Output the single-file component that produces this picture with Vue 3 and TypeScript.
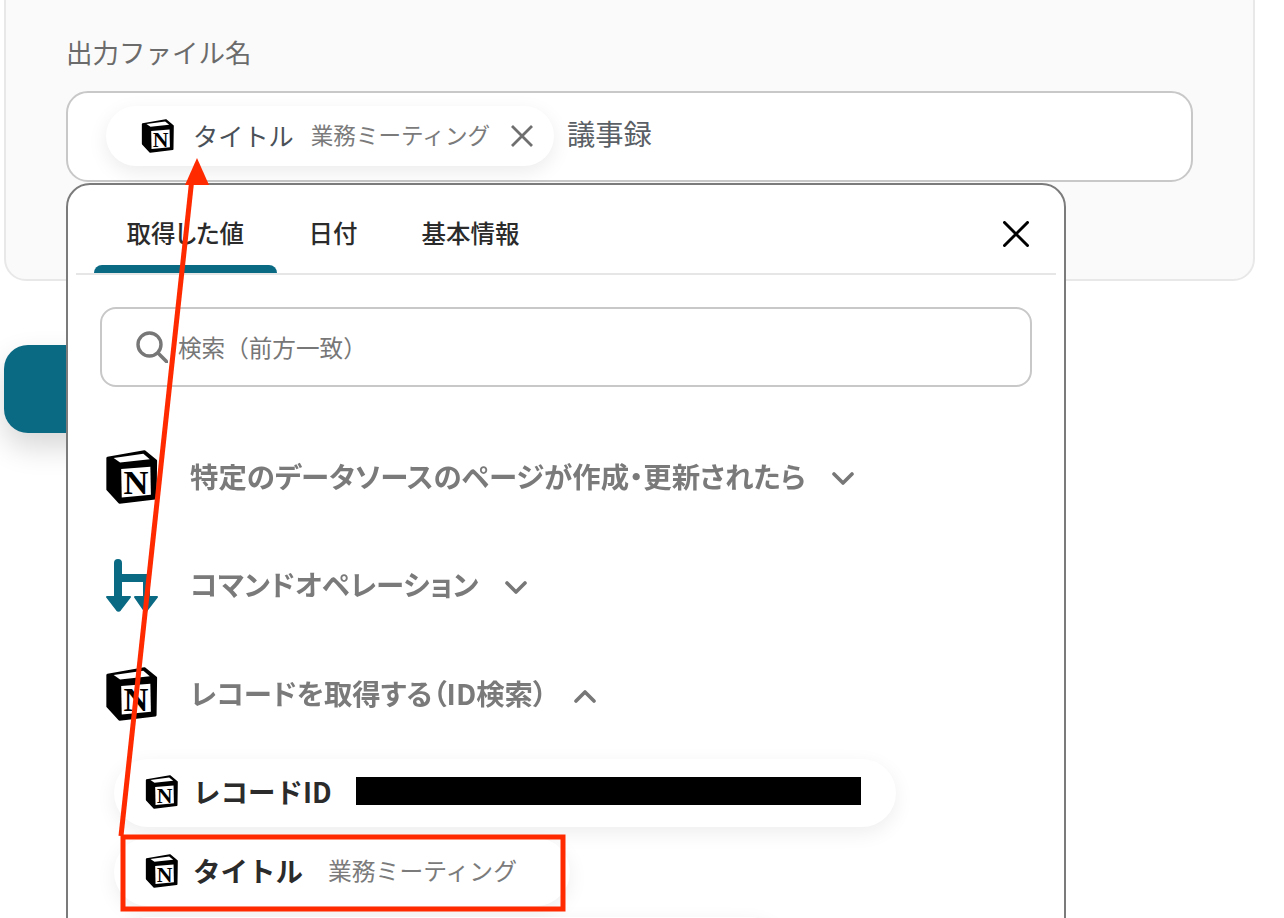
<script setup lang="ts">
import { h } from 'vue'
interface Section { title: string; icon: 'notion' | 'yoom'; open: boolean }
const tabs: string[] = ['取得した値', '日付', '基本情報']
const sections: Section[] = [
  { title: '特定のデータソースのページが作成・更新されたら', icon: 'notion', open: false },
  { title: 'コマンドオペレーション', icon: 'yoom', open: false },
  { title: 'レコードを取得する（ID検索）', icon: 'notion', open: true },
]
const NotionIcon = () =>
  h('svg', { viewBox: '0 0 100 100' }, [
    h('path', { d: 'M5 15 L73 3 L94 20 L93 89 L27 97 L5 73 Z', fill: '#000', stroke: '#000', 'stroke-width': 5, 'stroke-linejoin': 'round' }),
    h('path', { d: 'M16 15 L71 7 L83 17 L28 23 Z', fill: '#fff' }),
    h('path', { d: 'M30 35 L84 31 L85 83 L31 88 Z', fill: '#fff' }),
    h('text', { x: 57.5, y: 81, 'text-anchor': 'middle', 'font-family': "'Liberation Serif', serif", 'font-weight': 700, 'font-size': 64, fill: '#000' }, 'N'),
  ])
</script>

<template>
  <div class="page">
    <section class="panel">
      <div class="label">出力ファイル名</div>
      <div class="field">
        <div class="chip">
          <NotionIcon class="chip-icon" />
          <span class="chip-name">タイトル</span>
          <span class="chip-value">業務ミーティング</span>
          <svg class="chip-x" viewBox="0 0 24 24"><path d="M2 2 L22 22 M22 2 L2 22" stroke="#6f6f6f" stroke-width="2.8" /></svg>
        </div>
        <span class="field-text">議事録</span>
      </div>
    </section>

    <div class="primary"></div>

    <div class="popup">
      <div class="tabs">
        <div v-for="(t, i) in tabs" :key="t" class="tab" :class="{ active: i === 0 }">{{ t }}</div>
        <svg class="close" viewBox="0 0 26 26"><path d="M1.5 1.5 L24.5 24.5 M24.5 1.5 L1.5 24.5" stroke="#000" stroke-width="3" stroke-linecap="round" /></svg>
      </div>
      <div class="search">
        <svg class="search-icon" viewBox="0 0 32 32"><circle cx="13.5" cy="13.5" r="11.5" fill="none" stroke="#777" stroke-width="3.4" /><path d="M22 22 L31 31" stroke="#777" stroke-width="3.6" stroke-linecap="round" /></svg>
        <span>検索（前方一致）</span>
      </div>
      <div class="sections">
        <div v-for="s in sections" :key="s.title" class="section">
          <NotionIcon v-if="s.icon === 'notion'" class="section-icon" />
          <svg v-else class="section-icon" viewBox="0 0 54 54">
            <path d="M9 4 a4 4 0 0 1 8 0 V15 H45 V38 H38 V23 H17 V38 H9 Z" fill="#0a6a84" />
            <path d="M2 38 H25 L15 51 a2 2 0 0 1 -3 0 Z M30 38 H52 L42 51 a2 2 0 0 1 -3 0 Z" fill="#0a6a84" stroke="#0a6a84" stroke-width="2" stroke-linejoin="round" />
          </svg>
          <span class="section-title">{{ s.title }}</span>
          <svg class="chevron" viewBox="0 0 22 14"><path :d="s.open ? 'M2 12 L11 3 L20 12' : 'M2 2 L11 11 L20 2'" fill="none" stroke="#777" stroke-width="3.6" stroke-linecap="round" stroke-linejoin="round" /></svg>
        </div>
      </div>
      <div class="values">
        <div class="value-chip wide">
          <NotionIcon class="chip-icon small" />
          <span class="value-name">レコードID</span>
          <span class="redacted"></span>
        </div>
        <div class="value-chip">
          <NotionIcon class="chip-icon small" />
          <span class="value-name">タイトル</span>
          <span class="value-text">業務ミーティング</span>
        </div>
        <div class="value-chip third"></div>
      </div>
    </div>

    <svg class="annotation" viewBox="0 0 1284 918">
      <path d="M121 836 L192 178" stroke="#ff2a00" stroke-width="5" fill="none" />
      <path d="M197 158 L185 185 L209 185 Z" fill="#ff2a00" />
      <rect x="123" y="837" width="440" height="72" fill="none" stroke="#ff2a00" stroke-width="5" />
    </svg>
  </div>
</template>

<style>
body { margin: 0; background: #fff; }
</style>

<style scoped>
.page {
  position: relative;
  width: 1284px;
  height: 918px;
  overflow: hidden;
  background: #fff;
  font-family: "Noto Sans CJK JP", "Noto Sans", sans-serif;
}
.panel {
  box-sizing: border-box;
  width: 1251px;
  height: 301px;
  margin: -20px 0 0 4px;
  padding: 52px 60px 0 60px;
  background: #fafafa;
  border: 2px solid #e8e8e8;
  border-radius: 22px;
}
.label {
  font-size: 26.5px;
  line-height: 36px;
  color: #6b6b6b;
}
.field {
  box-sizing: border-box;
  height: 91px;
  margin-top: 21px;
  padding: 13px 38px;
  display: flex;
  align-items: flex-start;
  background: #fff;
  border: 2px solid #c8c8c8;
  border-radius: 22px;
}
.chip {
  width: 448px;
  height: 60px;
  flex: none;
  box-sizing: border-box;
  padding-left: 35px;
  display: flex;
  align-items: center;
  background: #fff;
  border-radius: 30px;
  box-shadow: 0 6px 20px rgba(0, 0, 0, 0.08);
}
.chip-icon { width: 34px; height: 34px; flex: none; }
.chip-name { margin-left: 18px; font-size: 25.2px; line-height: 36px; padding-bottom: 3px; color: #4a5158; white-space: nowrap; }
.chip-value { margin-left: 17px; font-size: 22.6px; line-height: 36px; padding-bottom: 3px; color: #7b7b7b; white-space: nowrap; }
.chip-x { width: 24px; height: 24px; margin-left: 20px; flex: none; }
.field-text {
  margin-left: 13px;
  font-size: 28.3px;
  line-height: 54px;
  color: #5a6066;
}
.primary {
  width: 300px;
  height: 88px;
  margin: 64px 0 0 4px;
  background: #0a6a84;
  border-radius: 24px;
  box-shadow: 0 14px 30px rgba(0, 0, 0, 0.16);
}
.popup {
  position: absolute;
  left: 66px;
  top: 183px;
  box-sizing: border-box;
  width: 1000px;
  height: 780px;
  padding: 0 8px;
  background: #fff;
  border: 2px solid #7b7b7b;
  border-radius: 24px;
}
.tabs {
  position: relative;
  height: 88px;
  display: flex;
  align-items: flex-start;
  padding-left: 18px;
  border-bottom: 2px solid #e6e6e6;
}
.tab {
  position: relative;
  height: 88px;
  box-sizing: border-box;
  padding: 30px 32px 0;
  font-size: 24.5px;
  line-height: 36px;
  font-weight: 500;
  font-feature-settings: "palt";
  color: #2b2b2b;
  white-space: nowrap;
}
.tab.active { padding: 30px 32.5px 0; }
.tab.active::after {
  content: "";
  position: absolute;
  left: 0;
  right: 0;
  bottom: 0;
  height: 8px;
  background: #0a6a84;
  border-radius: 8px 8px 0 0;
}
.close {
  position: absolute;
  right: 27px;
  top: 36px;
  width: 26px;
  height: 26px;
}
.search {
  box-sizing: border-box;
  height: 80px;
  margin: 32px 24px 0 24px;
  padding-left: 34px;
  display: flex;
  align-items: center;
  gap: 10px;
  border: 2px solid #c8c8c8;
  border-radius: 16px;
  font-size: 23.6px;
  color: #777;
}
.search-icon { width: 32px; height: 32px; flex: none; }
.sections {
  margin-top: 63px;
  padding-left: 29px;
  display: flex;
  flex-direction: column;
  gap: 54.5px;
}
.section {
  height: 54px;
  display: flex;
  align-items: center;
}
.section-icon { width: 54px; height: 54px; flex: none; }
.section-title {
  margin-left: 31px;
  font-size: 28.4px;
  line-height: 36px;
  padding-bottom: 3px;
  font-weight: 700;
  font-feature-settings: "palt";
  color: #7a7a7a;
  filter: blur(0.6px);
  white-space: nowrap;
}
.chevron { width: 22px; height: 14px; margin: 4px 0 0 27px; flex: none; filter: blur(0.4px); }
.values {
  margin-top: 38px;
  padding-left: 38px;
  display: flex;
  flex-direction: column;
  gap: 11px;
}
.value-chip {
  box-sizing: border-box;
  width: 456px;
  height: 68px;
  padding-left: 31px;
  display: flex;
  align-items: center;
  background: #fff;
  border-radius: 34px;
  box-shadow: 0 6px 20px rgba(0, 0, 0, 0.07);
}
.value-chip.wide { width: 782px; }
.value-chip .chip-icon { margin-bottom: 2px; }
.value-name { margin-left: 14px; font-size: 27.5px; line-height: 36px; padding-bottom: 5px; font-weight: 700; color: #2b2b2b; white-space: nowrap; }
.value-text { margin-left: 25px; font-size: 23.8px; line-height: 36px; padding-bottom: 5px; color: #7b7b7b; white-space: nowrap; }
.redacted { width: 505px; height: 28px; margin: 0 0 4px 24px; background: #000; flex: none; }
.value-chip.third { width: 670px; }
.annotation {
  position: absolute;
  left: 0;
  top: 0;
  width: 1284px;
  height: 918px;
  pointer-events: none;
}
</style>
